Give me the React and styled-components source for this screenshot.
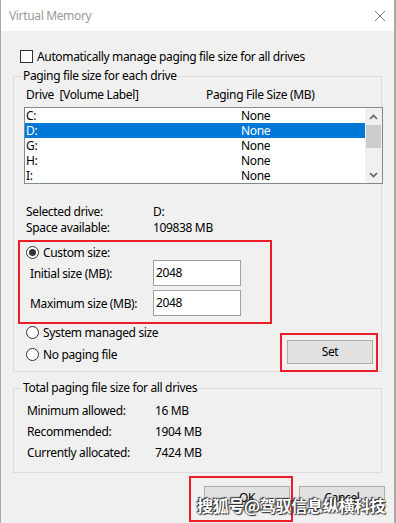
import React from "react";
import styled, { createGlobalStyle } from "styled-components";

const GlobalStyle = createGlobalStyle`
  html, body {
    margin: 0;
    padding: 0;
    background: #ffffff;
  }
  body {
    font-family: "Segoe UI", "Noto Sans", sans-serif;
    font-size: 12px;
    letter-spacing: -0.35px;
    color: #000;
  }
`;

const drives = [
  { name: "C:", size: "None" },
  { name: "D:", size: "None", selected: true },
  { name: "G:", size: "None" },
  { name: "H:", size: "None" },
  { name: "I:", size: "None" },
];

const totals = [
  { label: "Minimum allowed:", value: "16 MB" },
  { label: "Recommended:", value: "1904 MB" },
  { label: "Currently allocated:", value: "7424 MB" },
];

const Window = styled.div`
  position: relative;
  width: 396px;
  height: 523px;
  box-sizing: border-box;
  border-left: 1px solid #a8a8a8;
  border-right: 2px solid #a8a8a8;
  background: #f0f0f0;
  overflow: hidden;
`;

const TitleBar = styled.div`
  height: 31px;
  background: #fff;
  display: flex;
  align-items: center;
  justify-content: space-between;
  padding: 0 8px 0 8px;
  box-sizing: border-box;
`;

const TitleText = styled.span`
  color: #9a9a9a;
  font-size: 12px;
`;

const Body = styled.div`
  display: flex;
  flex-direction: column;
  padding: 17px 0 0 12px;
`;

const CheckRow = styled.label`
  display: flex;
  align-items: center;
  height: 16px;
  gap: 4px;
  padding-left: 7px;
`;

const CheckBox = styled.span`
  width: 13px;
  height: 13px;
  box-sizing: border-box;
  border: 1px solid #333;
  background: #fff;
`;

const Group = styled.fieldset`
  margin: ${({ $top }) => $top}px 0 0 0;
  padding: 0;
  width: 369px;
  box-sizing: border-box;
  border: 1px solid #dcdcdc;
  min-width: 0;
`;

const Legend = styled.legend`
  margin-left: 8px;
  padding: 0 1px;
  line-height: 16px;
`;

const HeaderRow = styled.div`
  display: grid;
  grid-template-columns: 180px 1fr;
  padding: 3px 0 0 12px;
  line-height: 16px;
`;

const ListBox = styled.div`
  margin: 4px 0 0 10px;
  width: 359px;
  height: 77px;
  box-sizing: border-box;
  border: 1px solid #828790;
  background: #fff;
  display: flex;
`;

const Rows = styled.div`
  flex: 1;
  display: flex;
  flex-direction: column;
`;

const ListRow = styled.div`
  display: grid;
  grid-template-columns: 215px 1fr;
  height: 15px;
  line-height: 15px;
  padding-left: 1px;
  background: ${({ $selected }) => ($selected ? "#0078d7" : "transparent")};
  color: ${({ $selected }) => ($selected ? "#fff" : "#000")};
`;

const ScrollBar = styled.div`
  width: 17px;
  background: #f0f0f0;
  display: flex;
  flex-direction: column;
  align-items: center;
`;

const ScrollArrow = styled.div`
  height: 17px;
  width: 100%;
  display: flex;
  align-items: center;
  justify-content: center;
`;

const ScrollThumb = styled.div`
  width: 15px;
  height: 23px;
  background: #cdcdcd;
`;

const ScrollSpacer = styled.div`
  flex: 1;
`;

const InfoRows = styled.div`
  display: flex;
  flex-direction: column;
  padding: 20px 0 0 12px;
`;

const InfoRow = styled.div`
  display: grid;
  grid-template-columns: 127px 1fr;
  line-height: 16px;
`;

const Highlight = styled.div`
  margin: 4px 0 0 4px;
  width: 254px;
  box-sizing: border-box;
  border: 2px solid #ee1c25;
  padding: 3px 0 6px 6px;
  display: flex;
  flex-direction: column;
`;

const RadioRow = styled.label`
  display: flex;
  align-items: center;
  gap: 4px;
  height: ${({ $h }) => $h || 16}px;
`;

const Radio = styled.span`
  width: 13px;
  height: 13px;
  box-sizing: border-box;
  border: 1px solid #333;
  border-radius: 50%;
  background: #fff;
  display: flex;
  align-items: center;
  justify-content: center;
  &::after {
    content: "";
    width: 7px;
    height: 7px;
    border-radius: 50%;
    background: ${({ $checked }) => ($checked ? "#333" : "transparent")};
  }
`;

const SizeRow = styled.div`
  display: grid;
  grid-template-columns: 123px 88px;
  align-items: center;
  padding-left: 4px;
  margin-top: ${({ $top }) => $top}px;
`;

const SizeInput = styled.div`
  height: 26px;
  box-sizing: border-box;
  border: 1px solid #a0a0a0;
  background: #fff;
  display: flex;
  align-items: center;
  padding: 0 0 1px 2px;
`;

const BottomArea = styled.div`
  display: flex;
  justify-content: space-between;
  align-items: flex-end;
  padding-right: 3px;
`;

const RadioColumn = styled.div`
  display: flex;
  flex-direction: column;
  gap: 6px;
  padding: 0 0 9px 12px;
`;

const SetMark = styled.div`
  border: 2px solid #ee1c25;
  padding: 5px 3px 6px 5px;
  margin-bottom: -1px;
`;

const Button = styled.div`
  width: 86px;
  height: 24px;
  box-sizing: border-box;
  border: 1px solid #adadad;
  background: #e1e1e1;
  display: flex;
  align-items: center;
  justify-content: center;
  line-height: 16px;
`;

const TotalRows = styled.div`
  display: flex;
  flex-direction: column;
  padding: 4px 0 9px 13px;
`;

const TotalRow = styled.div`
  display: grid;
  grid-template-columns: 128px 1fr;
  height: 21px;
  align-items: center;
`;

const ButtonBar = styled.div`
  display: flex;
  justify-content: flex-end;
  align-items: flex-start;
  gap: 6px;
  margin-top: 3px;
  padding-right: 9px;
`;

const OkMark = styled.div`
  border: 2px solid #ee1c25;
  padding: 8px 1px 10px 13px;
`;

const CancelWrap = styled.div`
  padding-top: 10px;
`;

const Watermark = styled.div`
  position: absolute;
  left: 196px;
  top: 493px;
  font-family: "Noto Sans CJK SC", sans-serif;
  font-size: 16px;
  font-weight: 700;
  color: #fff;
  letter-spacing: -0.3px;
  text-shadow: 0 0 2px #333, 1px 1px 1px #333, -1px -1px 1px #333;
`;

const CloseIcon = () => (
  <svg width="12" height="12" viewBox="0 0 12 12">
    <path d="M1 1L11 11M11 1L1 11" stroke="#7a7a7a" strokeWidth="1" />
  </svg>
);

const Chevron = ({ up }) => (
  <svg width="9" height="6" viewBox="0 0 9 6">
    <path
      d={up ? "M1 5L4.5 1.5L8 5" : "M1 1L4.5 4.5L8 1"}
      fill="none"
      stroke="#606060"
      strokeWidth="1.6"
    />
  </svg>
);

export default function App() {
  return (
    <>
      <GlobalStyle />
      <Window>
        <TitleBar>
          <TitleText>Virtual Memory</TitleText>
          <CloseIcon />
        </TitleBar>
        <Body>
          <CheckRow>
            <CheckBox />
            Automatically manage paging file size for all drives
          </CheckRow>

          <Group $top={4}>
            <Legend>Paging file size for each drive</Legend>
            <HeaderRow>
              <span>Drive&nbsp; [Volume Label]</span>
              <span>Paging File Size (MB)</span>
            </HeaderRow>
            <ListBox>
              <Rows>
                {drives.map((d) => (
                  <ListRow key={d.name} $selected={d.selected}>
                    <span>{d.name}</span>
                    <span>{d.size}</span>
                  </ListRow>
                ))}
              </Rows>
              <ScrollBar>
                <ScrollArrow>
                  <Chevron up />
                </ScrollArrow>
                <ScrollThumb />
                <ScrollSpacer />
                <ScrollArrow>
                  <Chevron />
                </ScrollArrow>
              </ScrollBar>
            </ListBox>

            <InfoRows>
              <InfoRow>
                <span>Selected drive:</span>
                <span>D:</span>
              </InfoRow>
              <InfoRow>
                <span>Space available:</span>
                <span>109838 MB</span>
              </InfoRow>
            </InfoRows>

            <Highlight>
              <RadioRow $h={15}>
                <Radio $checked />
                Custom size:
              </RadioRow>
              <SizeRow $top={0}>
                <span>Initial size (MB):</span>
                <SizeInput>2048</SizeInput>
              </SizeRow>
              <SizeRow $top={4}>
                <span>Maximum size (MB):</span>
                <SizeInput>2048</SizeInput>
              </SizeRow>
            </Highlight>

            <BottomArea>
              <RadioColumn>
                <RadioRow>
                  <Radio />
                  System managed size
                </RadioRow>
                <RadioRow>
                  <Radio />
                  No paging file
                </RadioRow>
              </RadioColumn>
              <SetMark>
                <Button>Set</Button>
              </SetMark>
            </BottomArea>
          </Group>

          <Group $top={8}>
            <Legend>Total paging file size for all drives</Legend>
            <TotalRows>
              {totals.map((t) => (
                <TotalRow key={t.label}>
                  <span>{t.label}</span>
                  <span>{t.value}</span>
                </TotalRow>
              ))}
            </TotalRows>
          </Group>
        </Body>

        <ButtonBar>
          <OkMark>
            <Button>OK</Button>
          </OkMark>
          <CancelWrap>
            <Button>Cancel</Button>
          </CancelWrap>
        </ButtonBar>

        <Watermark>搜狐号@驾驭信息纵横科技</Watermark>
      </Window>
    </>
  );
}
